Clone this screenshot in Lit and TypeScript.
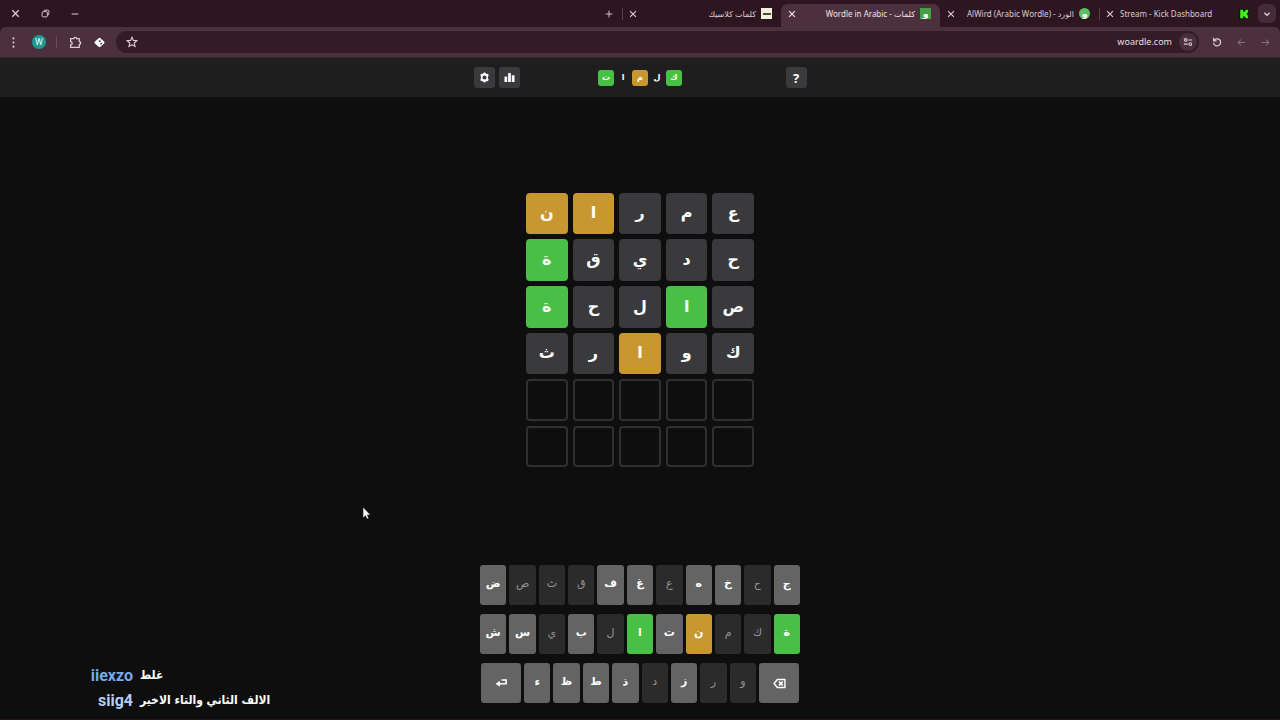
import { LitElement, html, svg, css, TemplateResult } from "lit";
import { customElement } from "lit/decorators.js";
import { classMap } from "lit/directives/class-map.js";

type Mark = "" | "hit" | "near" | "miss";

const icon = (body: TemplateResult, size: number, box = 24) => html`
  <svg width=${size} height=${size} viewBox="0 0 ${box} ${box}" aria-hidden="true">${body}</svg>
`;

const icons = {
  close: svg`<path d="M5 5l14 14M19 5L5 19" fill="none" stroke="currentColor" stroke-width="2.8"/>`,
  restore: svg`<g fill="none" stroke="currentColor" stroke-width="2.6"><rect x="3" y="7" width="14" height="14" rx="3"/><path d="M8 7V6a3 3 0 0 1 3-3h7a3 3 0 0 1 3 3v7a3 3 0 0 1-3 3h-1"/></g>`,
  minus: svg`<path d="M2 12h20" stroke="currentColor" stroke-width="3"/>`,
  plus: svg`<path d="M12 2v20M2 12h20" stroke="currentColor" stroke-width="2.8"/>`,
  chevron: svg`<path d="M4 8l8 8 8-8" fill="none" stroke="currentColor" stroke-width="4"/>`,
  dots: svg`<g fill="currentColor"><circle cx="12" cy="3" r="2.2"/><circle cx="12" cy="12" r="2.2"/><circle cx="12" cy="21" r="2.2"/></g>`,
  puzzle: svg`<path d="M3 5h6a2.6 2.6 0 0 1 5.200 0h4.800v5.500a2.600 2.600 0 0 1 0 5.200V21H3v-5a2.800 2.800 0 0 0 0-5.600z" fill="none" stroke="currentColor" stroke-width="2.400" stroke-linejoin="round"/>`,
  diamond: svg`<path d="M10 2.500q2-2 4 0l8 7.500q2 2 0 4l-8 7.500q-2 2-4 0L2 14q-2-2 0-4z" fill="#fff"/><path d="M10 7.500l4-.500 1 3-3.500 1zM13 15l3.500-3 1.500 2-3 3z" fill="#3c2430"/>`,
  star: svg`<path d="M12 2.500l2.800 6.300 6.900.7-5.200 4.600 1.500 6.800-6-3.500-6 3.500 1.500-6.800-5.200-4.600 6.900-.7z" fill="none" stroke="currentColor" stroke-width="2.200"/>`,
  tune: svg`<g fill="none" stroke="currentColor" stroke-width="2.600"><circle cx="6.500" cy="7" r="3.200"/><path d="M12.500 7H22M2 17h9.500"/><circle cx="17.500" cy="17" r="3.200"/></g>`,
  reload: svg`<path d="M4 2v7h7M4.500 9a8.500 8.500 0 1 1-.8 5" fill="none" stroke="currentColor" stroke-width="3"/>`,
  left: svg`<path d="M22 12H3M11 4l-8 8 8 8" fill="none" stroke="currentColor" stroke-width="2.800"/>`,
  right: svg`<path d="M2 12h19M13 4l8 8-8 8" fill="none" stroke="currentColor" stroke-width="2.800"/>`,
  gear: svg`<path fill="currentColor" fill-rule="evenodd" d="M9 3.500q.5-2.500 3-2.500t3 2.500l1.500.8q2.800-.8 4 1.300 1.300 2.200-.8 4v4.800q2.100 1.800.8 4-1.200 2.100-4 1.300l-1.500.8q-.5 2.500-3 2.500t-3-2.500l-1.500-.8q-2.800.8-4-1.300-1.300-2.200.8-4V9.600q-2.100-1.800-.8-4 1.200-2.100 4-1.300zM12 7.500a4.500 4.500 0 1 0 0 9 4.500 4.500 0 0 0 0-9z"/>`,
  bars: svg`<path fill="currentColor" d="M1 11q0-1 1-1h4q1 0 1 1v11H1zM9 3q0-1 1-1h4q1 0 1 1v19H9zM17 8q0-1 1-1h4q1 0 1 1v14h-6z"/>`,
  enter: svg`<path fill="currentColor" d="M22 4v10H9v4l-8-5.500L9 7v4h10V7h-7V4z"/>`,
  erase: svg`<path d="M8 4.500h14v15H8L2 12z" fill="none" stroke="currentColor" stroke-width="2.600" stroke-linejoin="round"/><path d="M11 8.500l7 7M18 8.500l-7 7" stroke="currentColor" stroke-width="3"/>`,
  kick: svg`<rect width="24" height="24" fill="#0b1408"/><path fill="#3df51c" d="M3 2h7v5h3V4h3V2h6v7h-3v6h3v7h-6v-2h-3v-3h-3v5H3z"/>`,
};

@customElement("browser-bar")
class BrowserBar extends LitElement {
  static styles = css`
    :host {
      display: block;
      font: 9px/12px "Noto Sans", "DejaVu Sans", sans-serif;
      color: #dccbd2;
      background: #2d1620;
    }
    button, a { color: inherit; font: inherit; text-decoration: none; }
    button {
      display: grid;
      place-items: center;
      padding: 0;
      border: 0;
      background: none;
    }
    svg { display: block; }
    .strip { display: flex; align-items: flex-end; height: 27px; }
    .window { display: flex; flex: 1; height: 27px; }
    .window button { width: 30px; }
    .add { width: 26px; height: 27px; }
    .tab {
      display: flex;
      align-items: center;
      gap: 5px;
      box-sizing: border-box;
      width: 159px;
      height: 23px;
      padding: 0 9px 4px 6px;
      border-radius: 7px 7px 0 0;
    }
    .tab.active { background: #4d303d; color: #efe2e7; }
    .tab.split { background: linear-gradient(#5a3d49, #5a3d49) 0 4px / 1px 12px no-repeat; border-radius: 0; }
    .tab button { width: 10px; height: 10px; }
    .tab a { flex: 1; text-align: right; white-space: nowrap; font-size: 8px; }
    .tab.start a { text-align: left; }
    .fav {
      display: grid;
      place-items: center;
      width: 11px;
      height: 11px;
      overflow: hidden;
      font: bold 10px/11px "DejaVu Sans", sans-serif;
      color: #fff;
    }
    .fav.paper { background: #f4f1dc; }
    .fav.paper i { width: 8px; height: 2px; background: #4c4a3c; }
    .fav.square { background: #43a047; }
    .fav.round { background: #5cbf60; border-radius: 50%; }
    .more {
      width: 18px;
      height: 19px;
      margin: 0 4px 4px 0;
      border-radius: 6px;
      background: #472b38;
    }
    .tools {
      display: flex;
      align-items: center;
      height: 31px;
      box-sizing: border-box;
      padding-right: 3px;
      border-bottom: 1px solid #37222c;
      background: #4d303d;
      border-radius: 6px 6px 0 0;
    }
    .tools > button { width: 24px; height: 24px; }
    .tools > .menu { width: 27px; }
    .avatar span {
      width: 14px;
      border-radius: 50%;
      background: #1a9c92;
      color: #fff;
      font-size: 8px;
      line-height: 14px;
    }
    .rule { width: 1px; height: 12px; margin: 0 6px 0 5px; background: #6a4c59; }
    .address {
      display: flex;
      align-items: center;
      flex: 1;
      height: 22px;
      margin: 0 6px 0 5px;
      padding: 0 2px 0 10px;
      border-radius: 11px;
      background: #331c27;
    }
    .address input {
      flex: 1;
      min-width: 0;
      padding: 0 7px;
      border: 0;
      background: none;
      color: #eadde2;
      font: 9px/16px "Noto Sans", sans-serif;
      text-align: right;
    }
    .site { width: 18px; height: 18px; border-radius: 50%; background: #4a303c; }
    .dim { color: #85707a; }
  `;

  render() {
    return html`
      <nav class="strip" aria-label="Tabs">
        <div class="window">
          <button aria-label="Close window">${icon(icons.close, 11)}</button>
          <button aria-label="Restore">${icon(icons.restore, 9)}</button>
          <button aria-label="Minimize">${icon(icons.minus, 8)}</button>
        </div>
        <button class="add" aria-label="New tab">${icon(icons.plus, 8)}</button>
        ${this.tab("كلمات كلاسيك", html`<span class="fav paper"><i></i></span>`, "split")}
        ${this.tab("Wordle in Arabic - كلمات", html`<span class="fav square">و</span>`, "active")}
        ${this.tab("AlWird (Arabic Wordle) - الورد", html`<span class="fav round">و</span>`)}
        ${this.tab("Stream - Kick Dashboard", html`<span class="fav">${icon(icons.kick, 10)}</span>`, "start split")}
        <button class="more" aria-label="Search tabs">${icon(icons.chevron, 8)}</button>
      </nav>
      <div class="tools">
        <button class="menu" aria-label="Menu">${icon(icons.dots, 11)}</button>
        <button class="avatar" aria-label="Profile"><span>W</span></button>
        <span class="rule"></span>
        <button aria-label="Extensions">${icon(icons.puzzle, 13)}</button>
        <button aria-label="Extension">${icon(icons.diamond, 11)}</button>
        <div class="address">
          <button aria-label="Bookmark">${icon(icons.star, 12)}</button>
          <input aria-label="Address" value="woardle.com" />
          <button class="site" aria-label="Site information">${icon(icons.tune, 10)}</button>
        </div>
        <button aria-label="Reload">${icon(icons.reload, 10)}</button>
        <button class="dim" aria-label="Back">${icon(icons.left, 9)}</button>
        <button class="dim" aria-label="Forward">${icon(icons.right, 9)}</button>
      </div>
    `;
  }

  private tab(title: string, favicon: TemplateResult, kind = "") {
    return html`
      <div class="tab ${kind}">
        <button aria-label="Close tab">${icon(icons.close, 10)}</button>
        <a href="#">${title}</a>
        ${favicon}
      </div>
    `;
  }
}

@customElement("word-board")
class WordBoard extends LitElement {
  static styles = css`
    :host { display: block; }
    .grid {
      display: grid;
      grid-template-columns: repeat(5, 1fr);
      gap: 5px;
      width: 228px;
      margin: 0 auto;
    }
    .tile {
      display: grid;
      place-items: center;
      box-sizing: border-box;
      aspect-ratio: 1;
      border: 2px solid #303031;
      border-radius: 4px;
      color: #fff;
      font: bold 16px/24px "DejaVu Sans", sans-serif;
    }
    .miss { background: #3a3a3c; border-color: #3a3a3c; }
    .near { background: #c9972f; border-color: #c9972f; }
    .hit { background: #48c046; border-color: #48c046; }
  `;

  private guesses: [string, Mark][][] = [
    [["ن", "near"], ["ا", "near"], ["ر", "miss"], ["م", "miss"], ["ع", "miss"]],
    [["ة", "hit"], ["ق", "miss"], ["ي", "miss"], ["د", "miss"], ["ح", "miss"]],
    [["ة", "hit"], ["ح", "miss"], ["ل", "miss"], ["ا", "hit"], ["ص", "miss"]],
    [["ث", "miss"], ["ر", "miss"], ["ا", "near"], ["و", "miss"], ["ك", "miss"]],
    Array(5).fill(["", ""]),
    Array(5).fill(["", ""]),
  ];

  render() {
    return html`<div class="grid">
      ${this.guesses.flat().map(([letter, mark]) => html`<div class="tile ${mark}">${letter}</div>`)}
    </div>`;
  }
}

@customElement("letter-keys")
class LetterKeys extends LitElement {
  static styles = css`
    :host { display: grid; gap: 9px; width: 320px; margin: 0 auto; }
    .row { display: flex; gap: 3px; }
    .row.last { padding: 0 1px; }
    button {
      display: grid;
      place-items: center;
      flex: 1 1 0;
      min-width: 0;
      height: 40px;
      padding: 0 0 3px;
      border: 0;
      border-radius: 3px;
      background: #646465;
      color: #fff;
      font: bold 11px/16px "DejaVu Sans", sans-serif;
    }
    .miss { background: #2b2b2c; color: #959596; font-weight: normal; }
    .near { background: #c9972f; }
    .hit { background: #48c046; }
    .wide { flex: 0 0 40px; padding: 0; }
  `;

  private rows: string[] = ["ض ص ث ق ف غ ع ه خ ح ج", "ش س ي ب ل ا ت ن م ك ة", "ء ظ ط ذ د ز ر و"];
  private marks: Record<string, Mark> = {
    "ا": "hit", "ة": "hit", "ن": "near",
    "ص": "miss", "ث": "miss", "ق": "miss", "ع": "miss", "ح": "miss", "ي": "miss",
    "ل": "miss", "م": "miss", "ك": "miss", "د": "miss", "ر": "miss", "و": "miss",
  };

  private keys(row: string) {
    return row.split(" ").map((k) => html`<button class=${this.marks[k] ?? ""}>${k}</button>`);
  }

  render() {
    return html`
      <div class="row">${this.keys(this.rows[0])}</div>
      <div class="row">${this.keys(this.rows[1])}</div>
      <div class="row last">
        <button class="wide" aria-label="Enter">${icon(icons.enter, 13)}</button>
        ${this.keys(this.rows[2])}
        <button class="wide" aria-label="Delete">${icon(icons.erase, 13)}</button>
      </div>
    `;
  }
}

@customElement("app-root")
class AppRoot extends LitElement {
  static styles = css`
    :host {
      display: flex;
      flex-direction: column;
      position: relative;
      box-sizing: border-box;
      min-height: 100vh;
      overflow: hidden;
      border-bottom: 1px solid #24141c;
      background: #0e0e0e;
      color: #fff;
      font-family: "DejaVu Sans", sans-serif;
    }
    header { background: #1e1e1f; }
    .bar {
      display: grid;
      grid-template-columns: 1fr auto 1fr;
      align-items: center;
      width: 333px;
      height: 39px;
      margin: 0 auto;
    }
    .group { display: flex; gap: 4px; }
    .group.end { justify-content: flex-end; }
    .group button {
      display: grid;
      place-items: center;
      width: 21px;
      height: 21px;
      padding: 0;
      border: 0;
      border-radius: 3px;
      background: #3a3a3c;
      color: #fff;
      font: bold 13px/16px "Noto Sans", sans-serif;
    }
    svg { display: block; }
    h1 { display: flex; gap: 1px; margin: 0; font: bold 8px/16px "DejaVu Sans", sans-serif; }
    h1 span { width: 16px; height: 16px; border-radius: 3px; text-align: center; }
    .hit { background: #48c046; }
    .near { background: #c9972f; }
    main { display: flex; flex: 1; flex-direction: column; padding-bottom: 16px; }
    .board { display: grid; flex: 1; align-content: center; padding-bottom: 2px; }
    .chat {
      position: absolute;
      left: 80px;
      bottom: 6px;
      display: grid;
      grid-template-columns: 53px auto;
      column-gap: 7px;
      margin: 0;
      font: bold 12px/25px "DejaVu Sans Condensed", "DejaVu Sans", sans-serif;
    }
    .chat dt { text-align: right; font: bold 16px/25px Roboto, sans-serif; }
    .chat dd { margin: 0; }
    .blue { color: #78a9ec; }
    .pale { color: #b3cdf5; }
    .pointer { position: absolute; left: 362px; top: 506px; }
  `;

  render() {
    const title: [string, Mark][] = [["ت", "hit"], ["ا", ""], ["م", "near"], ["ل", ""], ["ك", "hit"]];
    return html`
      <browser-bar></browser-bar>
      <header>
        <div class="bar">
          <div class="group">
            <button aria-label="Settings">${icon(icons.gear, 11)}</button>
            <button aria-label="Statistics">${icon(icons.bars, 11)}</button>
          </div>
          <h1>${title.map(([t, m]) => html`<span class=${classMap({ hit: m === "hit", near: m === "near" })}>${t}</span>`)}</h1>
          <div class="group end"><button aria-label="Help">?</button></div>
        </div>
      </header>
      <main>
        <div class="board"><word-board></word-board></div>
        <letter-keys></letter-keys>
      </main>
      <dl class="chat">
        <dt class="blue">iiexzo</dt><dd>غلط</dd>
        <dt class="pale">siig4</dt><dd>الالف الثاني والتاء الاخير</dd>
      </dl>
      <svg class="pointer" width="9" height="14" viewBox="0 0 9 14" aria-hidden="true">
        <path d="M1 1v11l2.500-2.300L5 13l1.800-.8-1.400-3.200H8.500z" fill="#fff" stroke="#111" stroke-width=".6" />
      </svg>
    `;
  }
}
